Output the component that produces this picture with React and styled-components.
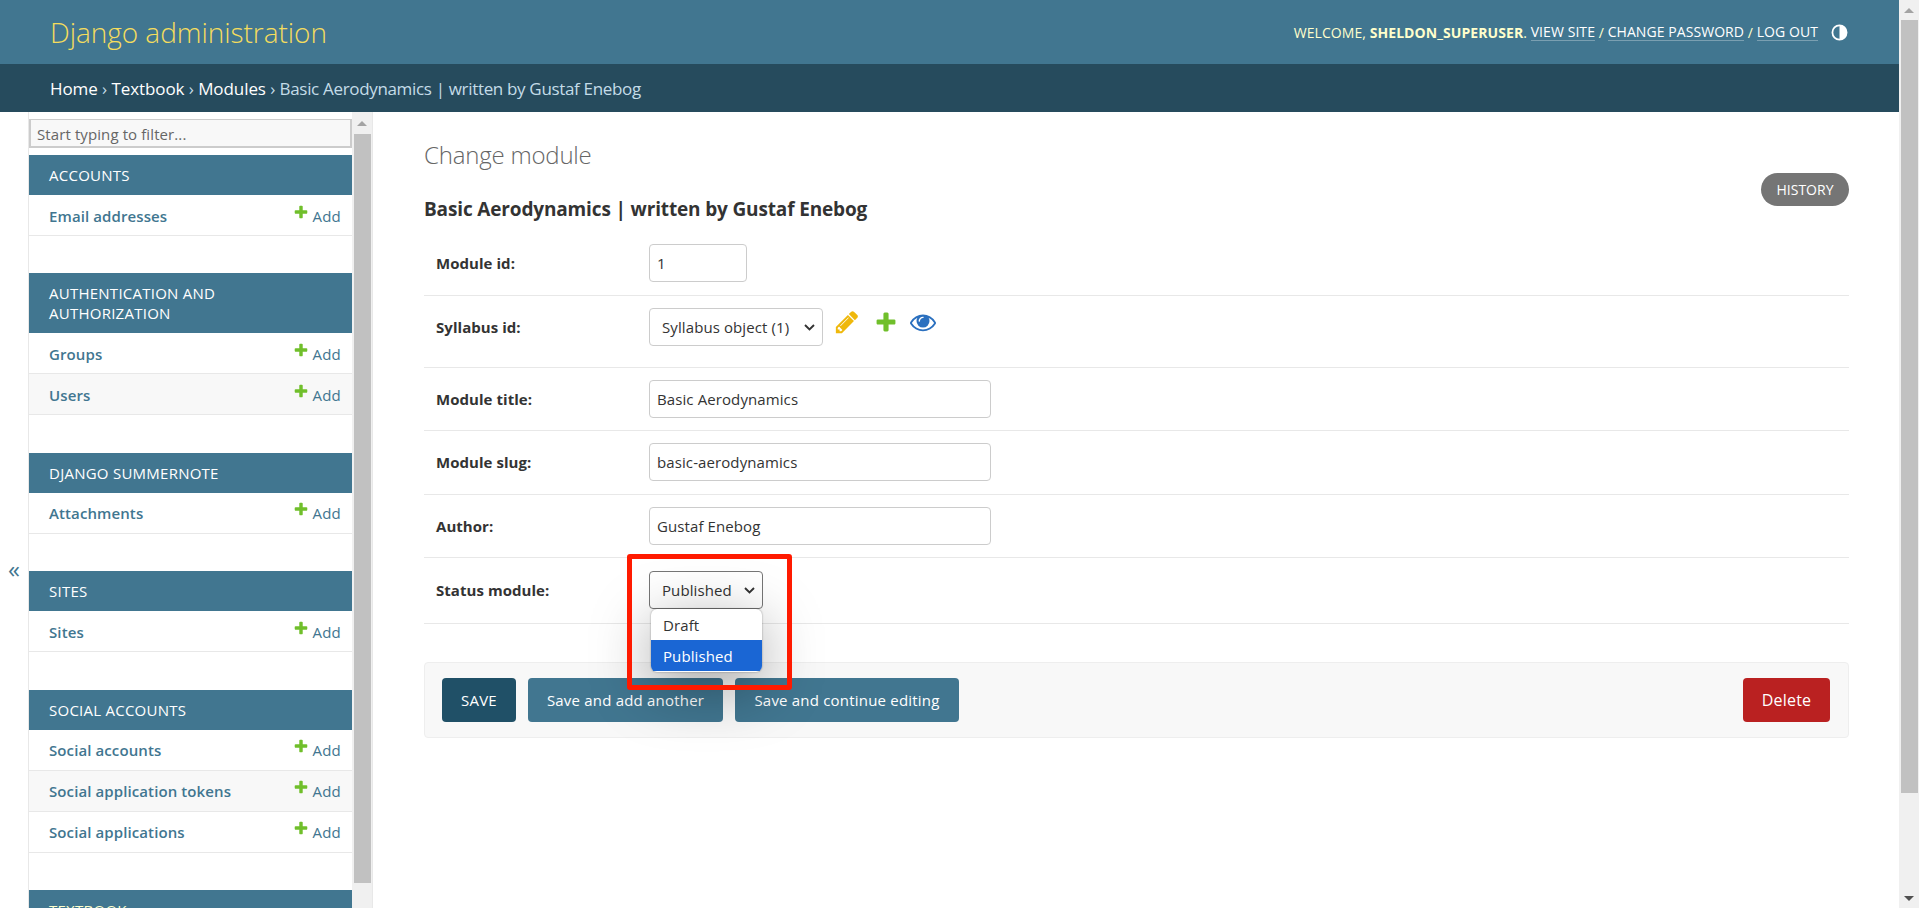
import React from "react";
import styled, { createGlobalStyle } from "styled-components";

const FONT = `"Open Sans", "Noto Sans", sans-serif`;
const CHEVRON = `url("data:image/svg+xml,%3Csvg xmlns='http://www.w3.org/2000/svg' width='11' height='7' viewBox='0 0 11 7'%3E%3Cpath d='M1 1l4.5 4.5L10 1' fill='none' stroke='%23333' stroke-width='1.9'/%3E%3C/svg%3E")`;

const Global = createGlobalStyle`
  html, body { margin: 0; height: 100%; overflow: hidden; background: #fff; }
  body { font-family: ${FONT}; color: #333; font-size: 15px; }
  * { box-sizing: border-box; }
`;

const Shell = styled.div`display: flex; height: 908px; overflow: hidden;`;
const Page = styled.div`flex: 1; min-width: 0; display: flex; flex-direction: column;`;

const Track = styled.div`
  flex: none; width: 20px; background: #f0f0f0; display: flex; flex-direction: column;
  align-items: center; height: 100%;
`;
const ArrowSlot = styled.div`
  flex: none; height: ${(p) => p.$h}px; width: 100%; display: flex; align-items: center; justify-content: center;
`;
const Arrow = styled.div`
  width: 0; height: 0; border-left: 5px solid transparent; border-right: 5px solid transparent;
  ${(p) => (p.$down ? "border-top: 5px solid #505050;" : "border-bottom: 5px solid #a3a3a3;")}
`;
const Thumb = styled.div`flex: none; width: 17px; height: ${(p) => p.$h}px; background: #c1c1c1;`;
const Spacer = styled.div`flex: 1;`;

const Header = styled.header`
  flex: none; height: 64px; background: #417690; display: flex; align-items: center;
  justify-content: space-between; padding: 0 51px 0 50px;
`;
const Brand = styled.div`font-size: 28px; font-weight: 300; color: #f5dd5d; letter-spacing: -0.05px;`;
const Tools = styled.div`
  display: flex; align-items: center; font-size: 14px; color: #ffc; text-transform: uppercase; letter-spacing: 0.07px;
  white-space: pre;
`;
const ToolLink = styled.span`color: #fff; border-bottom: 1px solid rgba(255,255,255,.3); line-height: 16px;`;
const ThemeBtn = styled.svg`width: 17px; height: 17px; margin-left: 13px; flex: none;`;

const Crumbs = styled.nav`
  flex: none; height: 48px; background: #264b5d; display: flex; align-items: center;
  padding-left: 50px; font-size: 17px; color: #c4dce8; white-space: pre; letter-spacing: -0.08px;
`;
const Crumb = styled.span`color: #fff;`;
const CurrentCrumb = styled.span`letter-spacing: -0.33px;`;

const Body = styled.div`flex: 1; min-height: 0; display: flex;`;
const Toggle = styled.div`
  flex: none; width: 28px; color: #417690; font-size: 24px; line-height: 24px; padding: 445px 0 0 8px;
`;
const Side = styled.aside`
  flex: none; width: 345px; display: flex; border-left: 1px solid #e8e8e8; border-right: 1px solid #e8e8e8; overflow: hidden;
`;
const SideList = styled.div`flex: none; width: 323px; overflow: hidden;`;
const Filter = styled.input`
  display: block; width: 100%; height: 29px; margin: 7px 0 7px; padding: 2px 6px 0; border: 2px solid #ccc; border-top-width: 1px;
  background: #f8f8f8; font: 15px ${FONT}; letter-spacing: 0.1px;
  &::placeholder { color: #666; opacity: 1; }
`;
const Module = styled.section`margin-bottom: 37.4px;`;
const Caption = styled.div`
  background: #417690; color: ${(p) => (p.$active ? "#ffc" : "#fff")}; padding: 10px 40px 10px 20px; font-size: 15px; line-height: 20px;
  text-transform: uppercase; letter-spacing: 0.25px;
`;
const ModelRow = styled.div`
  height: 41px; display: flex; align-items: center; justify-content: space-between; padding: 1px 11px 0 20px;
  border-bottom: 1px solid #e8e8e8; background: ${(p) => (p.$alt ? "#f8f8f8" : "#fff")};
`;
const ModelName = styled.span`font-weight: 600; color: #417690; font-size: 15px; letter-spacing: 0.1px;`;
const AddLink = styled.span`display: flex; align-items: center; gap: 4px; color: #417690; font-size: 15px; letter-spacing: 0.2px;`;
const AddIcon = styled.svg`width: 16px; height: 16px; position: relative; top: -4px;`;

const Content = styled.main`flex: 1; min-width: 0; padding: 0 50px 0 51px;`;
const TitleBar = styled.div`display: flex; justify-content: space-between; align-items: flex-start;`;
const H1 = styled.h1`margin: 27px 0 0; font-size: 24px; line-height: 32px; font-weight: 300; color: #666; letter-spacing: -0.2px;`;
const H2 = styled.h2`margin: 26px 0 13px; font-size: 19px; line-height: 24px; font-weight: 700; color: #333; letter-spacing: -0.15px;`;
const History = styled.span`
  margin-top: 61px; height: 33px; width: 88px; border-radius: 17px; background: #757575; color: #fff; display: flex;
  align-items: center; justify-content: center; font-size: 14px;
`;
const FormRow = styled.div`
  display: flex; align-items: center; padding: ${(p) => p.$pt}px 0 ${(p) => p.$pb}px 12px; border-bottom: 1px solid #e8e8e8;
`;
const Label = styled.label`flex: none; width: 213px; font-weight: 700; font-size: 15px; color: #333; letter-spacing: 0.05px;`;
const TextInput = styled.input`
  width: ${(p) => p.$w}px; height: 38px; padding: 0 7px; border: 1px solid #ccc; border-radius: 4px; background: #fff;
  font: 15px ${FONT}; color: #333; letter-spacing: 0.1px;
`;
const Select = styled.select`
  appearance: none; width: ${(p) => p.$w}px; height: 38px; padding: 0 8px 0 12px; border-radius: 4px;
  background: #fff ${CHEVRON} no-repeat right 7px center;
  border: 1px solid ${(p) => (p.$focus ? "#767676" : "#ccc")}; font: 15px ${FONT}; color: #333; letter-spacing: 0.1px;
`;
const RelatedIcon = styled.svg`flex: none; margin-left: ${(p) => p.$ml}px; position: relative; top: -5px;`;
const StatusWrap = styled.div`position: relative; display: flex;`;
const Dropdown = styled.div`
  position: absolute; left: 2px; top: 38px; width: 111px; background: #fff; border-radius: 6px; overflow: hidden;
  box-shadow: 0 14px 60px rgba(0,0,0,.36), 0 0 2px rgba(0,0,0,.4); z-index: 2; padding-bottom: 1px;
`;
const Option = styled.div`
  height: 31px; padding-left: 12px; display: flex; align-items: center; font-size: 15px; letter-spacing: 0.1px;
  ${(p) => p.$on ? "background: #1a66d4; color: #fff;" : "color: #333;"}
`;
const Callout = styled.div`
  position: absolute; left: -22px; top: -17px; width: 165px; height: 136px; border: 5px solid #ff1a00; border-radius: 3px; z-index: 3;
  pointer-events: none;
`;
const Submit = styled.div`
  display: flex; gap: 12px; margin-top: 38px; height: 76px; padding: 15px 18px 15px 17px; background: #f8f8f8;
  border: 1px solid #eee; border-radius: 4px;
`;
const Btn = styled.button`
  height: 44px; padding: 0 0 1px; width: ${(p) => p.$w}px; border: 0; border-radius: 4px; color: #fff;
  font: ${(p) => p.$fs || 15}px ${FONT}; letter-spacing: 0.2px;
  background: ${(p) => p.$bg || "#417690"}; ${(p) => p.$right && "margin-left: auto;"}
`;

const plus = "M1600 796v192q0 40-28 68t-68 28h-416v416q0 40-28 68t-68 28h-192q-40 0-68-28t-28-68v-416h-416q-40 0-68-28t-28-68v-192q0-40 28-68t68-28h416v-416q0-40 28-68t68-28h192q40 0 68 28t28 68v416h416q40 0 68 28t28 68z";
const pencil = "M491 1536l91-91-235-235-91 91v107h128v128h107zm523-928q0-22-22-22-10 0-17 7l-542 542q-7 7-7 17 0 22 22 22 10 0 17-7l542-542q7-7 7-17zm-54-192l416 416-832 832h-416v-416zm683 96q0 53-37 90l-166 166-416-416 166-165q36-38 90-38 53 0 91 38l235 234q37 39 37 91z";
const eye = "M1664 960q-152-236-381-353 61 104 61 225 0 185-131.5 316.5t-316.5 131.5-316.5-131.5-131.5-316.5q0-121 61-225-229 117-381 353 133 205 333.5 326.5t434.5 121.5 434.5-121.5 333.5-326.5zm-720-384q0-20-14-34t-34-14q-125 0-214.5 89.5t-89.5 214.5q0 20 14 34t34 14 34-14 14-34q0-86 61-147t147-61q20 0 34-14t14-34zm848 384q0 34-20 69-140 230-376.5 368.5t-499.5 138.5-499.5-139-376.5-368q-20-35-20-69t20-69q140-229 376.5-368t499.5-139 499.5 139 376.5 368q20 35 20 69z";

const modules = [
  { t: "Accounts", rows: ["Email addresses"] },
  { t: "Authentication and Authorization", rows: ["Groups", "Users"] },
  { t: "Django Summernote", rows: ["Attachments"] },
  { t: "Sites", rows: ["Sites"] },
  { t: "Social Accounts", rows: ["Social accounts", "Social application tokens", "Social applications"] },
  { t: "Textbook", rows: [], active: true },
];

const ScrollBar = ({ slot, thumb, endArrow }) => (
  <Track>
    <ArrowSlot $h={slot}><Arrow /></ArrowSlot>
    <Thumb $h={thumb} />
    <Spacer />
    {endArrow && <ArrowSlot $h={slot}><Arrow $down /></ArrowSlot>}
  </Track>
);

export default function App() {
  return (
    <Shell>
      <Global />
      <Page>
        <Header>
          <Brand>Django administration</Brand>
          <Tools>
            {"Welcome, "}<b>sheldon_superuser</b>{". "}
            <ToolLink>View site</ToolLink>{" / "}<ToolLink>Change password</ToolLink>{" / "}<ToolLink>Log out</ToolLink>
            <ThemeBtn viewBox="0 0 24 24" aria-label="Toggle theme">
              <circle cx="12" cy="12" r="10" fill="none" stroke="#fff" strokeWidth="2.5" />
              <path d="M12 2a10 10 0 0 1 0 20z" fill="#fff" />
            </ThemeBtn>
          </Tools>
        </Header>
        <Crumbs>
          <Crumb>Home</Crumb>{" › "}<Crumb>Textbook</Crumb>{" › "}<Crumb>Modules</Crumb>{" › "}<CurrentCrumb>Basic Aerodynamics | written by Gustaf Enebog</CurrentCrumb>
        </Crumbs>
        <Body>
          <Toggle>«</Toggle>
          <Side>
            <SideList>
              <Filter placeholder="Start typing to filter..." />
              {modules.map((m) => (
                <Module key={m.t}>
                  <Caption $active={m.active}>{m.t}</Caption>
                  {m.rows.map((r, i) => (
                    <ModelRow key={r} $alt={i % 2 === 1}>
                      <ModelName>{r}</ModelName>
                      <AddLink>
                        <AddIcon viewBox="0 0 1792 1792"><path fill="#70bf2b" d={plus} /></AddIcon>
                        Add
                      </AddLink>
                    </ModelRow>
                  ))}
                </Module>
              ))}
            </SideList>
            <ScrollBar slot={22} thumb={749} />
          </Side>
          <Content>
            <TitleBar>
              <div>
                <H1>Change module</H1>
                <H2>Basic Aerodynamics | written by Gustaf Enebog</H2>
              </div>
              <History>HISTORY</History>
            </TitleBar>
            <FormRow $pt={10} $pb={13}>
              <Label>Module id:</Label>
              <TextInput $w={98} defaultValue="1" />
            </FormRow>
            <FormRow $pt={12} $pb={21}>
              <Label>Syllabus id:</Label>
              <Select $w={174} defaultValue="1"><option value="1">Syllabus object (1)</option></Select>
              <RelatedIcon $ml={11} width="26" height="26" viewBox="0 0 1792 1792"><path fill="#efb80b" d={pencil} /></RelatedIcon>
              <RelatedIcon $ml={14} width="24" height="24" viewBox="0 0 1792 1792"><path fill="#70bf2b" d={plus} /></RelatedIcon>
              <RelatedIcon $ml={12} width="26" height="26" viewBox="0 0 1792 1792"><path fill="#2b70bf" d={eye} /></RelatedIcon>
            </FormRow>
            <FormRow $pt={12} $pb={12}>
              <Label>Module title:</Label>
              <TextInput $w={342} defaultValue="Basic Aerodynamics" />
            </FormRow>
            <FormRow $pt={12} $pb={13}>
              <Label>Module slug:</Label>
              <TextInput $w={342} defaultValue="basic-aerodynamics" />
            </FormRow>
            <FormRow $pt={12} $pb={12}>
              <Label>Author:</Label>
              <TextInput $w={342} defaultValue="Gustaf Enebog" />
            </FormRow>
            <FormRow $pt={13} $pb={14}>
              <Label>Status module:</Label>
              <StatusWrap>
                <Select $w={114} $focus defaultValue="p"><option value="p">Published</option></Select>
                <Dropdown>
                  <Option>Draft</Option>
                  <Option $on>Published</Option>
                </Dropdown>
                <Callout />
              </StatusWrap>
            </FormRow>
            <Submit>
              <Btn $w={74} $bg="#205067">SAVE</Btn>
              <Btn $w={195}>Save and add another</Btn>
              <Btn $w={224}>Save and continue editing</Btn>
              <Btn $w={87} $fs={16} $bg="#ba2121" $right>Delete</Btn>
            </Submit>
          </Content>
        </Body>
      </Page>
      <ScrollBar slot={20} thumb={773} endArrow />
    </Shell>
  );
}
